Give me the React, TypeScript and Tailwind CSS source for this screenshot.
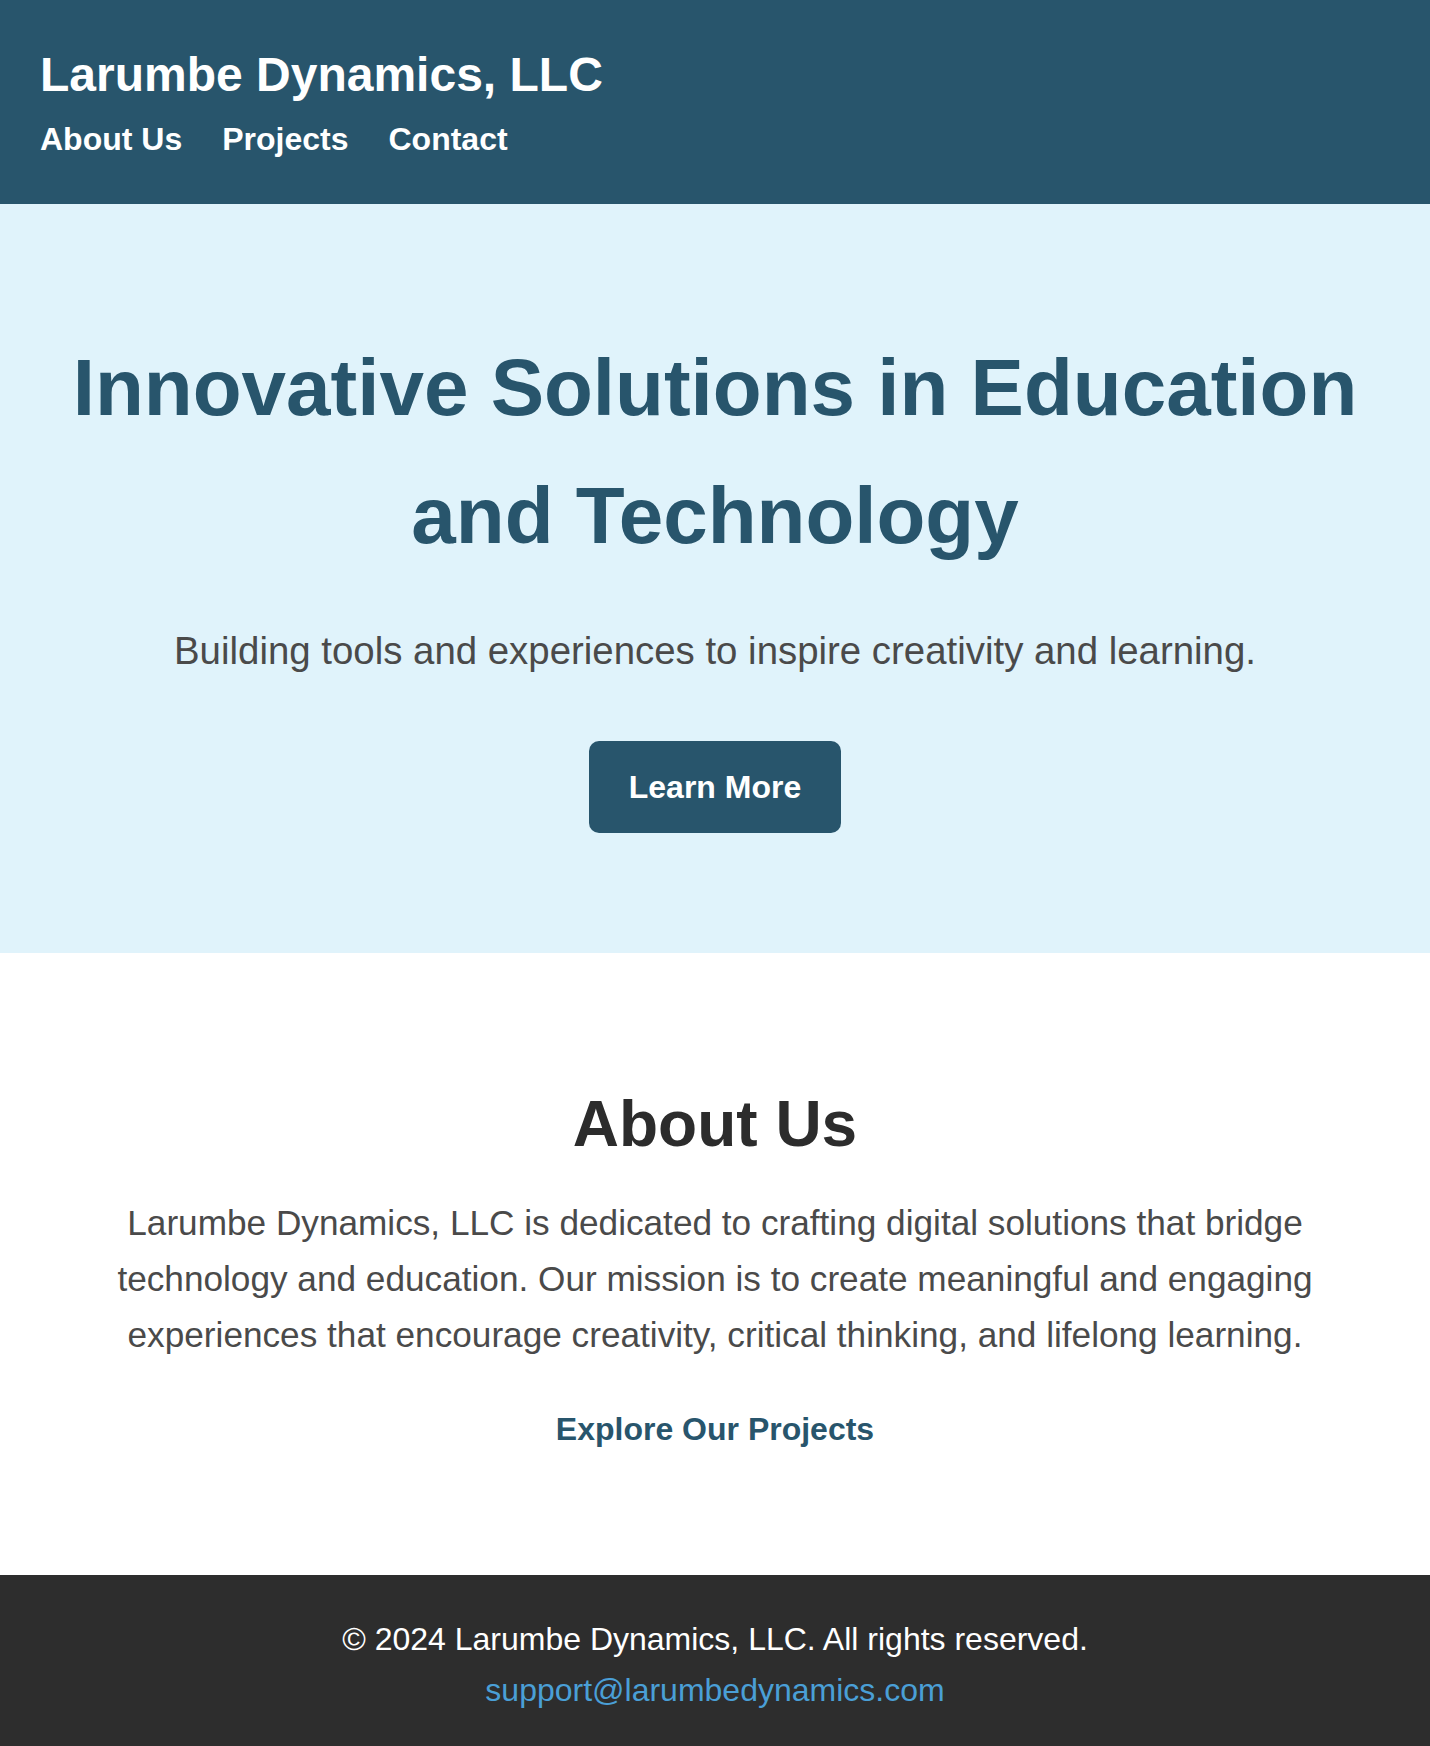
import React from 'react';

const navLinks = ['About Us', 'Projects', 'Contact'];

const App = () => {
  return (
    <div className="min-h-screen bg-white font-['Liberation_Sans',Arial,sans-serif] leading-[1.6]">
      <header className="bg-[#28556c] px-10 pt-[37px] pb-[39px] text-white">
        <h1 className="text-[48px] font-bold leading-[1.6]">Larumbe Dynamics, LLC</h1>
        <nav className="flex gap-10">
          {navLinks.map(link => (
            <a key={link} href="#" className="text-[32px] font-bold leading-[1.6]">
              {link}
            </a>
          ))}
        </nav>
      </header>

      <section className="bg-[#e0f3fb] px-10 py-[120px] text-center">
        <h2 className="text-[80px] font-bold leading-[1.6] text-[#28556c]">
          Innovative Solutions in Education and Technology
        </h2>
        <p className="mt-10 text-[38.4px] leading-[1.6] text-[#4a4a4a]">
          Building tools and experiences to inspire creativity and learning.
        </p>
        <button className="mt-[60px] rounded-[10px] bg-[#28556c] px-10 py-6 text-[32px] font-bold leading-[44px] text-white">
          Learn More
        </button>
      </section>

      <section className="px-10 pt-[120px] pb-[120px] text-center">
        <h2 className="text-[64px] font-bold leading-[1.6] text-[#2c2c2c]">About Us</h2>
        <p className="mx-auto mt-[19px] max-w-[1200px] text-[35.2px] leading-[1.6] text-[#4a4a4a]">
          Larumbe Dynamics, LLC is dedicated to crafting digital solutions that bridge technology and
          education. Our mission is to create meaningful and engaging experiences that encourage
          creativity, critical thinking, and lifelong learning.
        </p>
        <a href="#" className="mt-10 inline-block text-[32px] font-bold leading-[1.6] text-[#28556c]">
          Explore Our Projects
        </a>
      </section>

      <footer className="bg-[#2d2d2d] pt-[39px] pb-[30px] text-center text-[32px] leading-[1.6]">
        <p className="text-white">© 2024 Larumbe Dynamics, LLC. All rights reserved.</p>
        <a href="#" className="text-[#4a9fd6]">support@larumbedynamics.com</a>
      </footer>
    </div>
  );
};

export default App;
